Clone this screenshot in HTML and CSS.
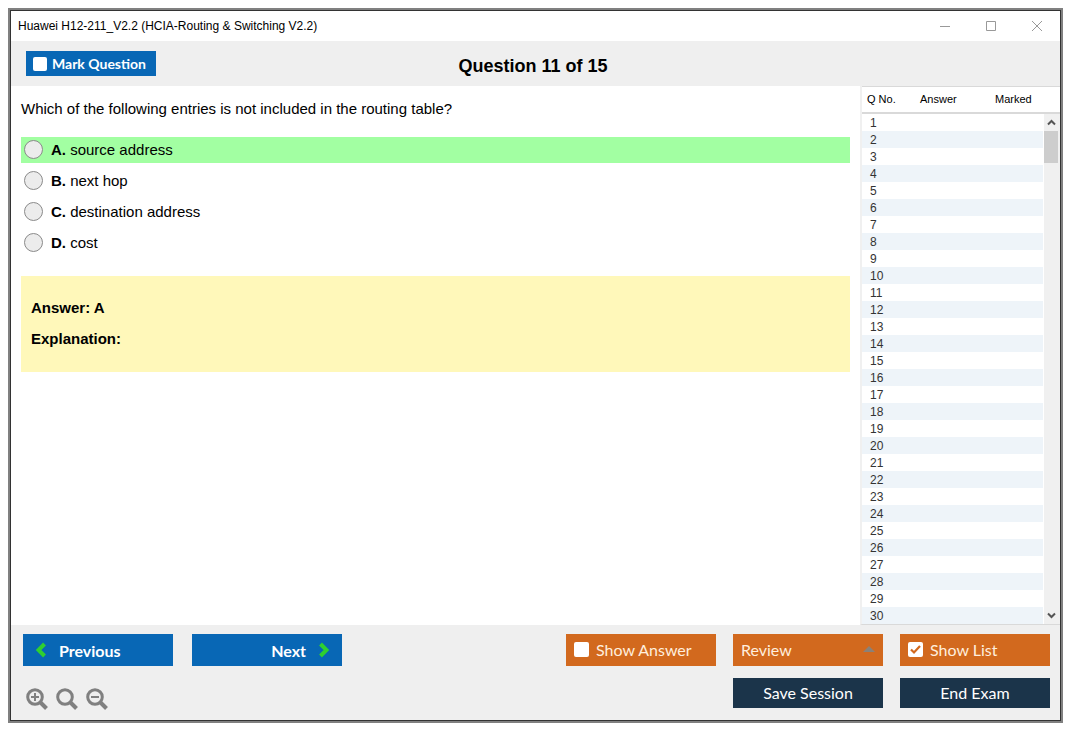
FILE: index.html
```html
<!DOCTYPE html>
<html lang="en">
<head>
    <meta charset="UTF-8">
    <title>Huawei H12-211_V2.2 (HCIA-Routing &amp; Switching V2.2)</title>
    <link rel="stylesheet" href="styles.css">
</head>
<body>
    <div class="window">
        <div class="titlebar">
            <span class="title">Huawei H12-211_V2.2 (HCIA-Routing &amp; Switching V2.2)</span>
            <div class="win_btns">
                <button type="button" aria-label="Minimize"><svg width="12" height="12" viewBox="0 0 12 12"><path d="M1 6.5h10"/></svg></button>
                <button type="button" aria-label="Maximize"><svg width="12" height="12" viewBox="0 0 12 12"><path d="M1.5 1.5h9v9h-9z"/></svg></button>
                <button type="button" aria-label="Close"><svg width="12" height="12" viewBox="0 0 12 12"><path d="M1 1l10 10M11 1L1 11"/></svg></button>
            </div>
        </div>
        <div class="header">
            <label class="mark"><input type="checkbox" class="check">Mark Question</label>
            <h1>Question 11 of 15</h1>
        </div>
        <div class="main">
            <div class="question">
                <p class="q_text">Which of the following entries is not included in the routing table?</p>
                <div class="options">
                    <label class="option correct"><input type="radio" name="answer" value="A"><span><b>A.</b> source address</span></label>
                    <label class="option"><input type="radio" name="answer" value="B"><span><b>B.</b> next hop</span></label>
                    <label class="option"><input type="radio" name="answer" value="C"><span><b>C.</b> destination address</span></label>
                    <label class="option"><input type="radio" name="answer" value="D"><span><b>D.</b> cost</span></label>
                </div>
                <div class="answer">
                    <p>Answer: A</p>
                    <p>Explanation:</p>
                </div>
            </div>
            <div class="list">
                <table>
                    <thead>
                        <tr><th class="col_no">Q No.</th><th class="col_answer">Answer</th><th class="col_marked">Marked</th></tr>
                    </thead>
                    <tbody id="q_rows"></tbody>
                </table>
                <div class="scrollbar">
                    <button type="button" aria-label="Scroll up"><svg width="9" height="7" viewBox="0 0 9 7"><path d="M1 5.5l3.5-3.5L8 5.5"/></svg></button>
                    <div class="thumb"></div>
                    <button type="button" class="down" aria-label="Scroll down"><svg width="9" height="7" viewBox="0 0 9 7"><path d="M1 1.5L4.5 5 8 1.5"/></svg></button>
                </div>
            </div>
        </div>
        <div class="footer">
            <div class="foot_left">
                <div class="nav">
                    <button type="button" class="btn blue"><svg width="10" height="16" viewBox="0 0 10 16"><path d="M8.5 2L2.5 8l6 6"/></svg>Previous</button>
                    <button type="button" class="btn blue next">Next<svg width="10" height="16" viewBox="0 0 10 16"><path d="M1.5 2l6 6-6 6"/></svg></button>
                </div>
                <div class="zoom">
                    <button type="button" aria-label="Zoom in"><svg width="22" height="22" viewBox="0 0 22 22"><circle cx="9" cy="9" r="7.3"/><path class="handle" d="M14 14l6.5 6.5"/><path class="sign" d="M5 9h8M9 5v8"/></svg></button>
                    <button type="button" aria-label="Reset zoom"><svg width="22" height="22" viewBox="0 0 22 22"><circle cx="9" cy="9" r="7.3"/><path class="handle" d="M14 14l6.5 6.5"/></svg></button>
                    <button type="button" aria-label="Zoom out"><svg width="22" height="22" viewBox="0 0 22 22"><circle cx="9" cy="9" r="7.3"/><path class="handle" d="M14 14l6.5 6.5"/><path class="sign" d="M5 9h8"/></svg></button>
                </div>
            </div>
            <div class="foot_right">
                <label class="btn orange"><input type="checkbox" class="check">Show Answer</label>
                <button type="button" class="btn orange review" aria-haspopup="true">Review<svg width="12" height="6" viewBox="0 0 12 6"><path d="M0 6l6-6 6 6z"/></svg></button>
                <label class="btn orange"><input type="checkbox" class="check" checked>Show List</label>
                <button type="button" class="btn navy save">Save Session</button>
                <button type="button" class="btn navy">End Exam</button>
            </div>
        </div>
    </div>

    <script>
        // question list rows
        const rows = document.querySelector("#q_rows");
        for (let i = 1; i <= 30; i++) {
            rows.insertAdjacentHTML("beforeend", `<tr><td>${i}</td><td></td><td></td></tr>`);
        }
    </script>
</body>
</html>
```
FILE: styles.css
```css
* { box-sizing: border-box; }
body {
    margin: 0;
    padding: 8px 12px 12px 8px;
    background-color: #fff;
    color: #000;
    font-family: "Liberation Sans", Arial, sans-serif;
    font-size: 15px;
}
button {
    padding: 0;
    border: none;
    background: none;
    color: inherit;
    font: inherit;
}
svg { display: block; flex: none; fill: none; }
p { margin: 0; }
.window {
    display: flex;
    flex-direction: column;
    min-height: calc(100vh - 20px);
    border: 2px solid #808080;
    outline: 1px solid #333;
    outline-offset: -3px;
    padding: 1px;
}
/* ================ title ================ */
.titlebar {
    display: flex;
    align-items: center;
    justify-content: space-between;
    height: 30px;
    padding: 0 17px 0 7px;
    font-size: 12px;
}
.win_btns { display: flex; gap: 34px; }
.win_btns svg { stroke: #999; }
.header {
    display: grid;
    grid-template-columns: 1fr auto 1fr;
    align-items: center;
    height: 45px;
    padding: 0 20px 0 15px;
    background-color: #efefef;
}
.header h1 {
    margin: 0;
    padding-top: 5px;
    font-size: 18px;
}
.mark {
    display: flex;
    align-items: center;
    justify-self: start;
    gap: 5px;
    width: 130px;
    height: 25px;
    padding-left: 7px;
    background-color: #0867b5;
    color: #fff;
    font: bold 14px Lato, Calibri, sans-serif;
}
.check {
    appearance: none;
    flex: none;
    width: 14px;
    height: 14px;
    margin: 0;
    border-radius: 2px;
    background-color: #fff;
}
/* ================ question ================ */
.main { display: flex; flex: 1; }
.question {
    flex: 1;
    padding: 14px 10px;
}
.q_text { line-height: 18px; }
.options {
    display: flex;
    flex-direction: column;
    gap: 5px;
    margin: 19px 0 20px;
}
.option {
    display: flex;
    align-items: center;
    gap: 8px;
    height: 26px;
    padding: 0 0 2px 3px;
}
.option input {
    appearance: none;
    width: 19px;
    height: 19px;
    margin: 0;
    border: 1px solid #8a8a8a;
    border-radius: 50%;
    background-color: #ececec;
}
.correct { background-color: #a2ffa2; }
.answer {
    display: flex;
    flex-direction: column;
    gap: 13px;
    padding: 23px 10px 24px;
    background-color: #fff8ba;
    font-weight: bold;
    line-height: 18px;
}
/* ================ question list ================ */
.list {
    display: flex;
    width: 200px;
    border-left: 2px solid #f0f0f0;
    border-bottom: 1px solid #d9d9d9;
    font-size: 12px;
    position: relative;
}
.list table {
    width: 100%;
    align-self: flex-start;
    border-collapse: separate;
    border-spacing: 0;
    table-layout: fixed;
    color: #333;
}
.list th {
    height: 28px;
    padding: 0 0 2px;
    border-top: 1px solid #d9d9d9;
    border-bottom: 2px solid #d9d9d9;
    color: #000;
    font-size: 11px;
    font-weight: normal;
    text-align: left;
}
.list .col_no { width: 58px; padding-left: 5px; }
.list .col_answer { width: 75px; }
.list td {
    height: 17px;
    padding: 2px 0 0 8px;
    line-height: 15px;
}
.list tbody tr:nth-child(even) { background-color: #eef4f9; }
/* lies over the right end of the rows, below the header */
.scrollbar {
    position: absolute;
    top: 28px;
    right: 0;
    bottom: 0;
    display: flex;
    flex-direction: column;
    width: 17px;
    padding-right: 2px;
    border-left: 1px solid #fff;
    background-color: #f0f0f0;
}
.scrollbar button {
    display: flex;
    align-items: center;
    justify-content: center;
    height: 17px;
}
.scrollbar svg { stroke: #555; stroke-width: 2; }
.thumb { height: 32px; background-color: #cdcdcd; }
.scrollbar .down { margin-top: auto; }
/* ================ footer ================ */
.footer {
    display: flex;
    justify-content: space-between;
    padding: 9px 10px 10px 12px;
    background-color: #efefef;
}
.btn {
    display: flex;
    align-items: center;
    width: 150px;
    height: 32px;
    color: #fff;
    font: 16px Lato, Calibri, sans-serif;
}
.blue {
    gap: 13px;
    padding: 0 13px;
    background-color: #0867b5;
    font-weight: bold;
}
.blue svg { stroke: #2fd02f; stroke-width: 4; }
.next { justify-content: flex-end; }
.nav { display: flex; gap: 19px; }
.zoom {
    display: flex;
    gap: 8px;
    padding: 22px 0 0 3px;
}
.zoom svg { stroke: #808080; }
.zoom circle { stroke-width: 3; }
.zoom .handle { stroke-width: 4; }
.zoom .sign { stroke-width: 2; }
.foot_right {
    display: grid;
    grid-template-columns: repeat(3, 150px);
    align-content: start;
    gap: 12px 17px;
}
.orange {
    gap: 7px;
    padding: 0 8px 2px;
    background-color: #d2691e;
    color: #ffeedd;
}
.orange .check { width: 15px; height: 15px; }
.orange .check:checked {
    background: #fff url("data:image/svg+xml,%3Csvg xmlns='http://www.w3.org/2000/svg' viewBox='0 0 15 15'%3E%3Cpath d='M3 7.5l3 3 6-6.5' fill='none' stroke='%23d2691e' stroke-width='2.2'/%3E%3C/svg%3E");
}
.review { justify-content: space-between; }
.review svg { fill: #8a8178; }
.navy {
    justify-content: center;
    height: 30px;
    padding-bottom: 2px;
    background-color: #1b344a;
}
.save { grid-column: 2; }
```
